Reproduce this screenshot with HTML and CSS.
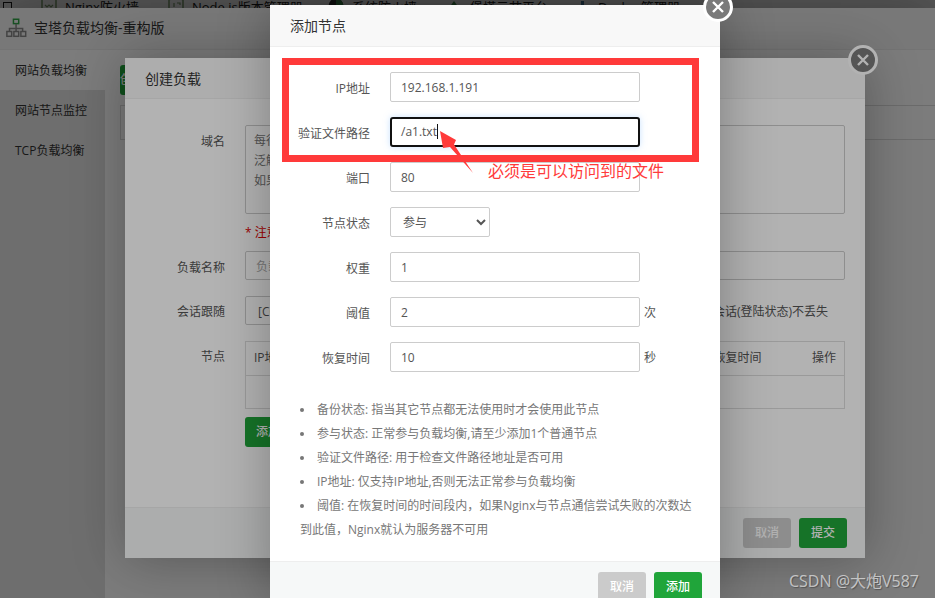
FILE: index.html
```html
<!DOCTYPE html>
<html lang="zh-CN">
<head>
<meta charset="utf-8">
<title>添加节点</title>
<link rel="stylesheet" href="styles.css">
</head>
<body>
<div class="strip">
  <span class="box"></span>
  <span class="app-item item-nginx"><svg class="strip-icon" viewBox="0 0 16 16"><path d="M8 -6 15 -2v12l-7 4-7-4V-2z" fill="none" stroke="#7f9f70" stroke-width="1.5"/><path d="M4 5l2 2 2-2 2 2 2-2" fill="none" stroke="#7f9f70" stroke-width="1.200"/></svg>Nginx防火墙</span>
  <span class="app-item item-node"><svg class="strip-icon" viewBox="0 0 16 16"><path d="M8 -4 15 0v10l-7 4-7-4V0z" fill="none" stroke="#7f9f70" stroke-width="1.500"/><path d="M6 3v4M9 3h3v2" fill="none" stroke="#7f9f70" stroke-width="1.200"/></svg>Node.js版本管理器</span>
  <span class="app-item item-fw"><svg class="strip-icon" viewBox="0 0 16 16"><circle cx="8" cy="6" r="7.500" fill="#333"/><path d="M8 -1.500A7.500 7.500 0 0 1 15.500 6H8z" fill="#3f8f4f"/></svg>系统防火墙</span>
  <span class="app-item item-cloud"><svg class="strip-icon" viewBox="0 0 16 16"><path d="M8 1 13 8H3z" fill="#3f8f4f"/></svg>堡塔云节平台</span>
  <span class="app-item item-docker"><svg class="strip-icon" viewBox="0 0 16 16"><rect x="3" y="5" width="3" height="3" fill="#4a7fa5"/><rect x="7" y="1" width="3" height="7" fill="#4a7fa5"/><rect x="12" y="5" width="2" height="3" fill="#4a7fa5"/></svg>Docker管理器</span>
</div>
<div class="shade"></div>

<section class="window app-window">
  <header class="app-title">
    <svg class="app-logo" viewBox="0 0 24 22" fill="none" stroke-width="1.700">
      <rect x="8.500" y="1" width="6" height="5" stroke="#30a848"/>
      <path d="M11.500 6v5M4 15v-3.500h15V15M11.500 11.500V15" stroke="#8a8a8a"/>
      <rect x="1" y="15" width="5.500" height="5.500" stroke="#8a8a8a"/>
      <rect x="9" y="15" width="5.500" height="5.500" stroke="#8a8a8a"/>
      <rect x="17" y="15" width="5.500" height="5.500" stroke="#8a8a8a"/>
    </svg>
    <span>宝塔负载均衡-重构版</span>
  </header>
  <div class="app-main">
    <nav class="app-side">
      <a class="side-link side-on">网站负载均衡</a>
      <a class="side-link">网站节点监控</a>
      <a class="side-link">TCP负载均衡</a>
    </nav>
    <div class="app-content">
      <button class="btn btn-green app-add">创建负载</button>
      <div class="app-table"></div>
    </div>
  </div>
</section>
<div class="shade"></div>

<section class="window modal-create">
  <button class="close" aria-label="关闭"><svg viewBox="0 0 14 14"><path d="M2 2l10 10M12 2 2 12"/></svg></button>
  <header class="modal-head">创建负载</header>
  <div class="create-body">
    <div class="create-row row-domain">
      <label class="create-label">域名</label>
      <div class="fake-area">每行填写一个域名，默认为80端口<br>泛解析添加方法 *.domain.com<br>如果另加端口格式为 www.domain.com:88</div>
    </div>
    <p class="create-note">* 注意：如果您的域名已在其它网站绑定</p>
    <div class="create-row row-name">
      <label class="create-label">负载名称</label>
      <input class="field field-wide" placeholder="负载名称">
    </div>
    <div class="create-row row-session">
      <label class="create-label">会话跟随</label>
      <div class="session">
        <span class="session-select">[COOKIE] 开启</span>
        <span class="session-tip">开启后可保持用户会话(登陆状态)不丢失</span>
      </div>
    </div>
    <div class="create-row row-nodes">
      <label class="create-label">节点</label>
      <div class="node-wrap">
        <table class="node-table">
          <thead><tr><th>IP地址</th><th class="th-time">恢复时间</th><th class="th-op">操作</th></tr></thead>
          <tbody><tr><td colspan="3"></td></tr></tbody>
        </table>
        <button class="btn btn-green">添加节点</button>
      </div>
    </div>
  </div>
  <footer class="create-foot">
    <button class="btn btn-grey">取消</button>
    <button class="btn btn-green">提交</button>
  </footer>
</section>
<div class="shade"></div>

<section class="window modal-node">
  <button class="close" aria-label="关闭"><svg viewBox="0 0 14 14"><path d="M2 2l10 10M12 2 2 12"/></svg></button>
  <header class="modal-head">添加节点</header>
  <form class="node-form">
    <div class="form-row"><label class="form-label">IP地址</label><input class="field field-main" value="192.168.1.191"></div>
    <div class="form-row"><label class="form-label">验证文件路径</label><div class="field field-main field-focus">/a1.txt<i class="caret"></i></div></div>
    <div class="form-row"><label class="form-label">端口</label><input class="field field-main" value="80"></div>
    <div class="form-row"><label class="form-label">节点状态</label><select class="field field-select"><option>参与</option></select></div>
    <div class="form-row"><label class="form-label">权重</label><input class="field field-main" value="1"></div>
    <div class="form-row"><label class="form-label">阈值</label><input class="field field-main" value="2"><span class="unit">次</span></div>
    <div class="form-row"><label class="form-label">恢复时间</label><input class="field field-main" value="10"><span class="unit">秒</span></div>
  </form>
  <ul class="tips">
    <li>备份状态: 指当其它节点都无法使用时才会使用此节点</li>
    <li>参与状态: 正常参与负载均衡,请至少添加1个普通节点</li>
    <li>验证文件路径: 用于检查文件路径地址是否可用</li>
    <li>IP地址: 仅支持IP地址,否则无法正常参与负载均衡</li>
    <li>阈值: 在恢复时间的时间段内，如果Nginx与节点通信尝试失败的次数达到此值，Nginx就认为服务器不可用</li>
  </ul>
  <footer class="node-foot">
    <button class="btn btn-light">取消</button>
    <button class="btn btn-green">添加</button>
  </footer>
</section>

<div class="mark-box"></div>
<svg class="mark-arrow" viewBox="0 0 40 50"><path d="M2 3 18 12 16 16.500 35 45 12 19 5 20z" fill="#ff3a3a"/></svg>
<div class="mark-text">必须是可以访问到的文件</div>
<div class="watermark">CSDN @大炮V587</div>
</body>
</html>
```
FILE: styles.css
```css
* { box-sizing: border-box; }
html, body { margin: 0; height: 598px; overflow: hidden; }
body {
  position: relative;
  width: 935px;
  background: #fff;
  color: #555;
  font: 12px/1.4 "Open Sans", "Noto Sans CJK SC", sans-serif;
}
.shade { position: absolute; inset: 0; background: rgba(0, 0, 0, .3); }
.window { position: absolute; box-shadow: 1px 1px 50px rgba(0, 0, 0, .3); }

/* cut-off row of the page behind */
.strip { display: flex; height: 8px; overflow: hidden; font-size: 13px; line-height: 20px; color: #222; white-space: nowrap; }
.box { width: 9px; height: 12px; margin: 2px 0 0 3px; border: 1px solid #222; flex: none; }
.app-item { display: flex; height: 20px; margin-top: -3px; }
.strip-icon { width: 16px; height: 16px; margin: 3px 8px 0 0; flex: none; }
.item-nginx { margin-left: 29px; width: 127px; }
.item-node { width: 160px; }
.item-fw { width: 118px; }
.item-cloud { width: 128px; }

/* app window */
.app-window { left: 0; right: 0; top: 8px; bottom: 0; background: #fff; overflow: hidden; display: flex; flex-direction: column; }
.app-title { height: 42px; flex: none; display: flex; align-items: center; gap: 7px; padding: 0 0 1px 6px; background: #f8f8f8; border-bottom: 1px solid #eee; font-size: 14px; color: #333; }
.app-logo { width: 21px; height: 20px; }
.app-main { flex: 1; display: flex; }
.app-side { width: 105px; background: #e2e2e2; }
.side-link { display: block; height: 40px; padding-left: 15px; line-height: 42px; color: #333; }
.side-on { background: #fff; }
.app-content { flex: 1; padding: 15px 0 0 15px; }
.app-add { display: block; width: 80px; }
.app-table { height: 35px; margin-top: 10px; border: 1px solid #ddd; border-right: 0; }

/* shared modal parts */
.modal-head { height: 42px; flex: none; padding-left: 20px; line-height: 41px; font-size: 14px; color: #333; background: #f8f8f8; border-bottom: 1px solid #eee; }
.close { position: absolute; top: -13px; right: -13px; width: 30px; height: 30px; padding: 0; display: flex; align-items: center; justify-content: center; border: 3px solid #fff; border-radius: 50%; background: #7a7a7a; }
.close svg { width: 14px; height: 14px; fill: none; stroke: #fff; stroke-width: 2.400; }
.btn { width: 48px; height: 30px; padding: 0; border: 0; border-radius: 3px; color: #fff; font: 500 12px/30px "Open Sans", "Noto Sans CJK SC", sans-serif; }
.btn-green { background: #20a53a; }
.btn-grey, .btn-light { background: #cbcbcb; }
.field { height: 30px; padding: 0 10px; border: 1px solid #ccc; border-radius: 2px; background: #fff; color: #555; font: 12px/28px "Open Sans", "Noto Sans CJK SC", sans-serif; }
.field::placeholder { color: #aaa; }

/* create-load modal */
.modal-create { left: 125px; top: 58px; width: 740px; height: 500px; background: #fff; display: flex; flex-direction: column; }
.modal-create .modal-head { height: 41px; }
.create-body { flex: 1; padding-top: 26px; }
.create-row { display: flex; align-items: flex-start; }
.create-label { width: 100px; height: 29px; flex: none; margin-right: 20px; text-align: right; line-height: 32px; }
.row-domain .create-label { line-height: 34px; }
.row-name .create-label { line-height: 33px; }
.fake-area { width: 600px; height: 89px; padding: 5px 8px; border: 1px solid #ccc; border-radius: 2px; line-height: 20px; color: #777; white-space: nowrap; overflow: hidden; }
.create-note { margin: 10px 0 0 120px; line-height: 17px; color: #d00; }
.row-name { margin-top: 10px; }
.field-wide { width: 600px; height: 29px; padding-top: 1px; }
.row-session { margin-top: 16px; }
.session { width: 600px; height: 29px; display: flex; justify-content: space-between; padding-right: 17px; line-height: 32px; }
.session-select { width: 180px; height: 29px; padding-left: 12px; line-height: 29px; border: 1px solid #ccc; border-radius: 2px; }
.row-nodes { margin-top: 16px; }
.node-wrap { width: 600px; }
.node-table { width: 600px; border-collapse: collapse; border: 1px solid #ddd; }
.node-table th { height: 34px; padding: 0 8px; text-align: left; font-weight: 400; border-bottom: 1px solid #ddd; }
.node-table td { height: 33px; }
.node-table .th-time { width: 150px; padding: 0; text-align: right; }
.node-table .th-op { width: 83px; text-align: right; }
.node-wrap .btn { width: 70px; margin-top: 8px; display: block; }
.create-foot { height: 51px; flex: none; display: flex; justify-content: flex-end; gap: 8px; padding: 10px 18px 0 0; background: #f6f8f8; border-top: 1px solid #eee; }

/* add-node modal */
.modal-node { left: 270px; top: 5px; width: 450px; height: 593px; background: #fff; }
.node-form { padding-top: 25px; display: flex; flex-direction: column; gap: 15px; }
.form-row { display: flex; align-items: center; height: 30px; }
.form-label { width: 100px; margin-right: 20px; text-align: right; padding-top: 4px; }
.field-main { width: 250px; flex: none; }
.field-select { width: 100px; padding: 1px 8px 0; }
.field-focus { position: relative; border: 2px solid #111; border-radius: 3px; padding-left: 9px; line-height: 26px; box-shadow: 0 0 6px rgba(150, 200, 255, .5); }
.caret { display: inline-block; width: 1px; height: 15px; vertical-align: -3px; background: #111; }
.unit { margin-left: 4px; padding-top: 3px; }
.tips { width: 400px; margin: 26px 0 19px 30px; padding: 0; list-style-position: inside; line-height: 24px; color: #777; }
.node-foot { height: 37px; overflow: hidden; display: flex; justify-content: flex-end; gap: 8px; padding: 10px 18px 0 0; background: #f6f8f8; border-top: 1px solid #eee; }

/* annotations drawn on the screenshot */
.mark-box { position: absolute; left: 282px; top: 58px; width: 417px; height: 104px; border: 7px solid #ff3a3a; }
.mark-arrow { position: absolute; left: 438px; top: 128px; width: 40px; height: 50px; }
.mark-text { position: absolute; left: 488px; top: 160px; font-size: 16px; line-height: 22px; color: #ff3b3b; }
.watermark { position: absolute; left: 789px; top: 570px; font-size: 16px; line-height: 22px; color: rgba(255, 255, 255, .62); text-shadow: 1px 1px 1px rgba(0, 0, 0, .3); }
```
